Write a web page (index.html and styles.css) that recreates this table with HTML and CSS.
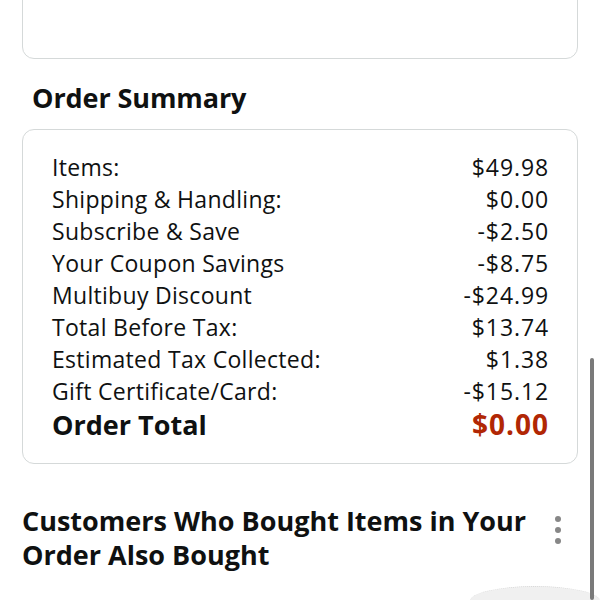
FILE: index.html
```html
<!DOCTYPE html>
<html lang="en">
<head>
<meta charset="utf-8">
<link rel="stylesheet" href="styles.css">
</head>
<body>
<div class="page">
  <div class="card card-top"></div>

  <h2 class="section-title">Order Summary</h2>

  <div class="card summary">
    <div class="row"><span>Items:</span><span class="val">$49.98</span></div>
    <div class="row"><span>Shipping &amp; Handling:</span><span class="val">$0.00</span></div>
    <div class="row"><span>Subscribe &amp; Save</span><span class="val">-$2.50</span></div>
    <div class="row"><span>Your Coupon Savings</span><span class="val">-$8.75</span></div>
    <div class="row"><span>Multibuy Discount</span><span class="val">-$24.99</span></div>
    <div class="row"><span>Total Before Tax:</span><span class="val">$13.74</span></div>
    <div class="row"><span>Estimated Tax Collected:</span><span class="val">$1.38</span></div>
    <div class="row"><span>Gift Certificate/Card:</span><span class="val">-$15.12</span></div>
    <div class="row total"><span>Order Total</span><span class="val total-value">$0.00</span></div>
  </div>

  <div class="also-header">
    <h2 class="also-title">Customers Who Bought Items in Your Order Also Bought</h2>
    <div class="kebab"><span></span><span></span><span></span></div>
  </div>

  <div class="carousel">
    <div class="product-img"></div>
  </div>
</div>
<div class="scrollbar"></div>
</body>
</html>
```

FILE: styles.css
```css
html, body {
  margin: 0;
  padding: 0;
  background: #fff;
  overflow: hidden;
}
body {
  font-family: "Open Sans", "Liberation Sans", sans-serif;
  color: #0f1111;
  width: 600px;
  height: 600px;
  position: relative;
}
.page {
  padding: 0 22px 0 22px;
}
.card {
  border: 1.5px solid #d5d9d9;
  border-radius: 12px;
  background: #fff;
}
.card-top {
  margin-top: -20px;
  height: 77px;
}
.section-title {
  margin: 0;
  padding: 16px 0 0 10px;
  height: 54px;
  font-size: 27px;
  font-weight: 700;
  line-height: 46px;
  letter-spacing: -0.1px;
}
.summary {
  margin-top: 0;
  padding: 21px 28px 21px 29px;
  height: 291px;
}
.row {
  display: flex;
  justify-content: space-between;
  font-size: 23px;
  line-height: 32px;
  height: 32px;
  letter-spacing: 0.3px;
}
.val {
  letter-spacing: 0.9px;
}
.row.total {
  font-size: 27px;
  font-weight: 700;
  line-height: 35px;
  height: 35px;
  letter-spacing: 0;
}
.total-value {
  color: #b12704;
  font-size: 28px;
  letter-spacing: 1px;
}
.also-header {
  display: flex;
  justify-content: space-between;
  align-items: flex-start;
  padding-top: 40px;
}
.also-title {
  margin: 0;
  font-size: 27px;
  font-weight: 700;
  line-height: 34px;
  width: 515px;
  letter-spacing: 0;
}
.kebab {
  display: flex;
  flex-direction: column;
  gap: 5px;
  padding: 12px 17px 0 0;
}
.kebab span {
  width: 6px;
  height: 6px;
  border-radius: 50%;
  background: #878787;
}
.carousel {
  display: flex;
  justify-content: flex-end;
  margin-right: -22px;
  padding-top: 14px;
}
.product-img {
  width: 130px;
  height: 30px;
  border-radius: 65px / 15px;
  background: #f0f0f0;
  border-top: 1px dotted #d8d8d8;
}
.scrollbar {
  position: absolute;
  right: 6px;
  top: 358px;
  width: 4px;
  height: 242px;
  background: #7a7a7a;
  border-radius: 2px;
}
```
